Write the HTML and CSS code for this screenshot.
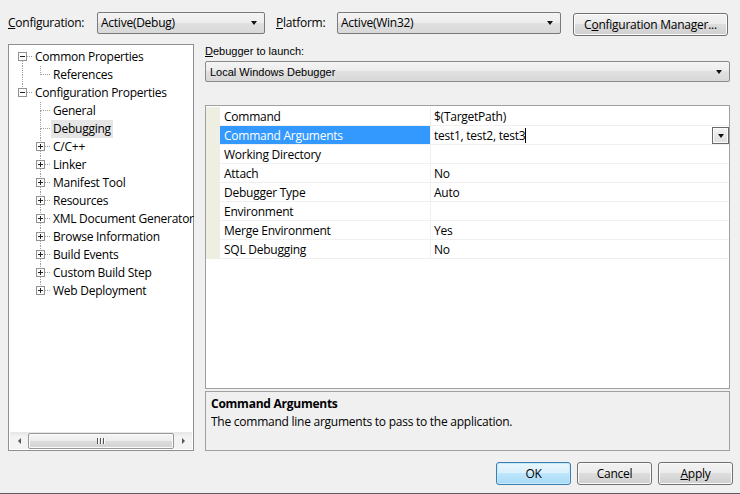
FILE: index.html
```html
<!DOCTYPE html>
<html>
<head>
<meta charset="utf-8">
<link rel="stylesheet" href="styles.css">
</head>
<body>
<div class="dialog">
  <div class="topbar">
    <span class="lbl lbl-config"><u>C</u>onfiguration:</span>
    <div class="combo combo-config"><span class="combo-text">Active(Debug)</span><span class="arrow"></span></div>
    <span class="lbl lbl-platform"><u>P</u>latform:</span>
    <div class="combo combo-platform"><span class="combo-text">Active(Win32)</span><span class="arrow"></span></div>
    <button class="btn btn-manager">C<u>o</u>nfiguration Manager...</button>
  </div>

  <div class="main">
    <div class="treepanel">
      <div class="tree">
        <div class="row">
          <div class="cell"><span class="tl"></span><span class="tr hline"></span><span class="bl vline"></span><span class="br"></span><svg class="box" width="9" height="9"><rect x="0.5" y="0.5" width="8" height="8" fill="#fdfdfd" stroke="#929292"/><path d="M2 4.5h5" stroke="#222"/></svg></div>
          <span class="label">Common Properties</span>
        </div>
        <div class="row">
          <div class="cell"><span class="tl vline"></span><span class="tr"></span><span class="bl vline"></span><span class="br"></span></div>
          <div class="cell"><span class="tl vline"></span><span class="tr hline"></span><span class="bl"></span><span class="br"></span></div>
          <span class="label">References</span>
        </div>
        <div class="row">
          <div class="cell"><span class="tl vline"></span><span class="tr hline"></span><span class="bl"></span><span class="br"></span><svg class="box" width="9" height="9"><rect x="0.5" y="0.5" width="8" height="8" fill="#fdfdfd" stroke="#929292"/><path d="M2 4.5h5" stroke="#222"/></svg></div>
          <span class="label">Configuration Properties</span>
        </div>
        <div class="row">
          <div class="cell"></div>
          <div class="cell"><span class="tl vline"></span><span class="tr hline"></span><span class="bl vline"></span><span class="br"></span></div>
          <span class="label">General</span>
        </div>
        <div class="row">
          <div class="cell"></div>
          <div class="cell"><span class="tl vline"></span><span class="tr hline"></span><span class="bl vline"></span><span class="br"></span></div>
          <span class="label selected">Debugging</span>
        </div>
        <div class="row">
          <div class="cell"></div>
          <div class="cell"><span class="tl vline"></span><span class="tr hline"></span><span class="bl vline"></span><span class="br"></span><svg class="box" width="9" height="9"><rect x="0.5" y="0.5" width="8" height="8" fill="#fdfdfd" stroke="#929292"/><path d="M2 4.5h5M4.5 2v5" stroke="#222"/></svg></div>
          <span class="label">C/C++</span>
        </div>
        <div class="row">
          <div class="cell"></div>
          <div class="cell"><span class="tl vline"></span><span class="tr hline"></span><span class="bl vline"></span><span class="br"></span><svg class="box" width="9" height="9"><rect x="0.5" y="0.5" width="8" height="8" fill="#fdfdfd" stroke="#929292"/><path d="M2 4.5h5M4.5 2v5" stroke="#222"/></svg></div>
          <span class="label">Linker</span>
        </div>
        <div class="row">
          <div class="cell"></div>
          <div class="cell"><span class="tl vline"></span><span class="tr hline"></span><span class="bl vline"></span><span class="br"></span><svg class="box" width="9" height="9"><rect x="0.5" y="0.5" width="8" height="8" fill="#fdfdfd" stroke="#929292"/><path d="M2 4.5h5M4.5 2v5" stroke="#222"/></svg></div>
          <span class="label">Manifest Tool</span>
        </div>
        <div class="row">
          <div class="cell"></div>
          <div class="cell"><span class="tl vline"></span><span class="tr hline"></span><span class="bl vline"></span><span class="br"></span><svg class="box" width="9" height="9"><rect x="0.5" y="0.5" width="8" height="8" fill="#fdfdfd" stroke="#929292"/><path d="M2 4.5h5M4.5 2v5" stroke="#222"/></svg></div>
          <span class="label">Resources</span>
        </div>
        <div class="row">
          <div class="cell"></div>
          <div class="cell"><span class="tl vline"></span><span class="tr hline"></span><span class="bl vline"></span><span class="br"></span><svg class="box" width="9" height="9"><rect x="0.5" y="0.5" width="8" height="8" fill="#fdfdfd" stroke="#929292"/><path d="M2 4.5h5M4.5 2v5" stroke="#222"/></svg></div>
          <span class="label">XML Document Generator</span>
        </div>
        <div class="row">
          <div class="cell"></div>
          <div class="cell"><span class="tl vline"></span><span class="tr hline"></span><span class="bl vline"></span><span class="br"></span><svg class="box" width="9" height="9"><rect x="0.5" y="0.5" width="8" height="8" fill="#fdfdfd" stroke="#929292"/><path d="M2 4.5h5M4.5 2v5" stroke="#222"/></svg></div>
          <span class="label">Browse Information</span>
        </div>
        <div class="row">
          <div class="cell"></div>
          <div class="cell"><span class="tl vline"></span><span class="tr hline"></span><span class="bl vline"></span><span class="br"></span><svg class="box" width="9" height="9"><rect x="0.5" y="0.5" width="8" height="8" fill="#fdfdfd" stroke="#929292"/><path d="M2 4.5h5M4.5 2v5" stroke="#222"/></svg></div>
          <span class="label">Build Events</span>
        </div>
        <div class="row">
          <div class="cell"></div>
          <div class="cell"><span class="tl vline"></span><span class="tr hline"></span><span class="bl vline"></span><span class="br"></span><svg class="box" width="9" height="9"><rect x="0.5" y="0.5" width="8" height="8" fill="#fdfdfd" stroke="#929292"/><path d="M2 4.5h5M4.5 2v5" stroke="#222"/></svg></div>
          <span class="label">Custom Build Step</span>
        </div>
        <div class="row">
          <div class="cell"></div>
          <div class="cell"><span class="tl vline"></span><span class="tr hline"></span><span class="bl"></span><span class="br"></span><svg class="box" width="9" height="9"><rect x="0.5" y="0.5" width="8" height="8" fill="#fdfdfd" stroke="#929292"/><path d="M2 4.5h5M4.5 2v5" stroke="#222"/></svg></div>
          <span class="label">Web Deployment</span>
        </div>
      </div>
      <div class="hscroll">
        <span class="sarrow sarrow-left"></span>
        <div class="thumb"><span class="grip"></span><span class="grip"></span><span class="grip"></span></div>
        <span class="sarrow sarrow-right"></span>
      </div>
    </div>

    <div class="rightpane">
      <div class="dbg-label"><u>D</u>ebugger to launch:</div>
      <div class="combo combo-dbg"><span class="combo-text">Local Windows Debugger</span><span class="arrow"></span></div>

      <div class="grid">
        <div class="prow"><span class="margin"></span><span class="pname">Command</span><span class="pval">$(TargetPath)</span></div>
        <div class="prow"><span class="margin"></span><span class="pname sel">Command Arguments</span><span class="pval edit"><span class="edit-text">test1, test2, test3</span><span class="caret"></span><span class="ddbtn"><span class="ddarrow"></span></span></span></div>
        <div class="prow"><span class="margin"></span><span class="pname">Working Directory</span><span class="pval"></span></div>
        <div class="prow"><span class="margin"></span><span class="pname">Attach</span><span class="pval">No</span></div>
        <div class="prow"><span class="margin"></span><span class="pname">Debugger Type</span><span class="pval">Auto</span></div>
        <div class="prow"><span class="margin"></span><span class="pname">Environment</span><span class="pval"></span></div>
        <div class="prow"><span class="margin"></span><span class="pname">Merge Environment</span><span class="pval">Yes</span></div>
        <div class="prow"><span class="margin"></span><span class="pname">SQL Debugging</span><span class="pval">No</span></div>
      </div>

      <div class="desc">
        <div class="desc-title">Command Arguments</div>
        <div class="desc-text">The command line arguments to pass to the application.</div>
      </div>
    </div>
  </div>

  <div class="footer">
    <button class="btn btn-ok">OK</button>
    <button class="btn">Cancel</button>
    <button class="btn"><u>A</u>pply</button>
  </div>
</div>
</body>
</html>
```
FILE: styles.css
```css
* { box-sizing: border-box; }
html, body { margin: 0; padding: 0; }
body {
  width: 740px;
  height: 494px;
  background: #f0f0f0;
  font-family: "Open Sans", "Noto Sans", sans-serif;
  font-size: 12px;
  letter-spacing: -0.25px;
  color: #000;
  overflow: hidden;
}
u { text-decoration: underline; text-underline-offset: 1px; }

.dialog {
  height: 494px;
  border-bottom: 1px solid #5c5c5c;
  padding: 12px 0 0 8px;
  display: flex;
  flex-direction: column;
}

/* top bar */
.topbar { display: flex; align-items: flex-start; height: 23px; }
.lbl { line-height: 22px; }
.lbl-config { width: 89px; }
.lbl-platform { width: 61px; margin-left: 11px; }

.combo {
  height: 22px;
  border: 1px solid #7a7a7a;
  border-radius: 2px;
  background: linear-gradient(to bottom, #f4f4f4 0%, #ececec 50%, #e0e0e0 50%, #d8d8d8 100%);
  display: flex;
  align-items: center;
  justify-content: space-between;
  padding: 0 7px 0 3px;
}
.combo-text { line-height: 18px; }
.arrow {
  width: 0; height: 0;
  border-left: 3.5px solid transparent;
  border-right: 3.5px solid transparent;
  border-top: 4px solid #111;
}
.combo-config { width: 168px; }
.combo-platform { width: 224px; }

.btn {
  font-family: inherit;
  font-size: 12px;
  letter-spacing: -0.25px;
  color: #000;
  height: 23px;
  border: 1px solid #707070;
  border-radius: 3px;
  background: linear-gradient(to bottom, #f2f2f2 0%, #ebebeb 50%, #dddddd 50%, #cfcfcf 100%);
  box-shadow: inset 0 0 0 1px #fbfbfb;
  padding: 0;
}
.btn-manager { width: 155px; margin-left: 12px; margin-top: 1px; }

/* main */
.main { display: flex; margin-top: 9px; height: 407px; }

.treepanel {
  width: 186px;
  height: 407px;
  background: #fff;
  border: 1px solid #8e8f8f;
  display: flex;
  flex-direction: column;
}
.tree { flex: 1; padding: 3px 0 0 5px; }
.row { display: flex; height: 18px; align-items: center; }
.cell {
  width: 18px; height: 18px;
  display: grid;
  grid-template-columns: 9px 9px;
  grid-template-rows: 9px 9px;
  flex: none;
}
.cell span { display: block; }
.cell .tl { grid-area: 1 / 1; }
.cell .tr { grid-area: 1 / 2; }
.cell .bl { grid-area: 2 / 1; }
.cell .br { grid-area: 2 / 2; }
.vline { border-right: 1px dotted #a0a0a0; }
.hline { border-bottom: 1px dotted #a0a0a0; }
.cell .box { grid-area: 1 / 1 / 3 / 3; margin: 4px 0 0 4px; display: block; }
.label {
  padding: 0 2px;
  margin-left: 1px;
  line-height: 18px;
  white-space: nowrap;
}
.label.selected { background: #e5e5e5; }

.hscroll {
  height: 17px;
  margin: 0 1px 1px 1px;
  background: linear-gradient(to bottom, #e6e6e6, #f3f3f3 30%, #f3f3f3);
  display: flex;
  align-items: center;
}
.sarrow { width: 18px; height: 17px; display: flex; align-items: center; justify-content: center; }
.sarrow-left::before {
  content: ""; width: 0; height: 0;
  border-top: 3px solid transparent; border-bottom: 3px solid transparent;
  border-right: 3px solid #555;
}
.sarrow-right::before {
  content: ""; width: 0; height: 0;
  border-top: 3px solid transparent; border-bottom: 3px solid transparent;
  border-left: 3px solid #555;
}
.thumb {
  flex: 1;
  height: 16px;
  border: 1px solid #979797;
  border-radius: 2px;
  background: linear-gradient(to bottom, #f6f6f6 0%, #ececec 50%, #dcdcdc 51%, #d2d2d2 100%);
  box-shadow: inset 0 0 0 1px #fafafa;
  display: flex;
  justify-content: center;
  align-items: center;
  gap: 1px;
}
.grip { width: 1px; height: 6px; background: #555; box-shadow: 1px 0 0 #fff; margin-right: 1px; }

/* right pane */
.rightpane { width: 525px; margin-left: 11px; display: flex; flex-direction: column; }
.dbg-label {
  font-family: "Liberation Sans", Arial, sans-serif;
  font-size: 11px;
  letter-spacing: 0;
  line-height: 14px;
  height: 17px;
}
.combo-dbg {
  width: 525px;
  height: 21px;
  border-color: #8a8a8a;
  font-family: "Liberation Sans", Arial, sans-serif;
  font-size: 11px;
  letter-spacing: 0;
  padding-left: 4px;
}

.grid {
  margin-top: 23px;
  height: 284px;
  background: #fff;
  border: 1px solid #a0a0a0;
  padding-top: 1px;
}
.prow {
  display: flex;
  height: 19px;
}
.margin { width: 14px; background: #efeee2; flex: none; }
.pname {
  width: 211px;
  flex: none;
  padding: 1px 0 0 4px;
  line-height: 17px;
  border-right: 1px solid #f0f0f0;
  border-bottom: 1px solid #f0f0f0;
  white-space: nowrap;
}
.pname.sel { background: #3399ff; color: #fff; border-bottom-color: #f0f0f0; }
.pval {
  flex: 1;
  padding: 1px 0 0 3px;
  line-height: 17px;
  border-bottom: 1px solid #f0f0f0;
}
.pval.edit { display: flex; align-items: flex-start; padding-top: 0; }
.edit-text { padding-top: 1px; }
.caret { width: 1px; height: 15px; background: #000; margin-top: 2px; }
.ddbtn {
  margin-left: auto;
  margin-top: 1px;
  width: 17px;
  height: 17px;
  border: 1px solid #6a6a6a;
  background: linear-gradient(to bottom, #f4f4f4, #dedede);
  box-shadow: inset 0 0 0 1px #fafafa;
  display: flex;
  align-items: center;
  justify-content: center;
}
.ddarrow {
  width: 0; height: 0;
  border-left: 3.5px solid transparent;
  border-right: 3.5px solid transparent;
  border-top: 4px solid #111;
  margin-top: 1px;
}

.desc {
  margin-top: 2px;
  height: 60px;
  border: 1px solid #a0a0a0;
  padding: 3px 0 0 5px;
}
.desc-title { font-weight: bold; line-height: 17px; }
.desc-text { line-height: 18px; margin-top: 1px; }

/* footer */
.footer {
  display: flex;
  justify-content: flex-end;
  gap: 6px;
  padding-right: 7px;
  margin-top: 11px;
}
.footer .btn { width: 75px; }
.btn-ok {
  border-color: #3c7fb1;
  background: linear-gradient(to bottom, #eaf6fd 0%, #d9f0fc 50%, #bee6fd 50%, #a7d9f5 100%);
  box-shadow: inset 0 0 0 1px #c6e8fb;
}
```
